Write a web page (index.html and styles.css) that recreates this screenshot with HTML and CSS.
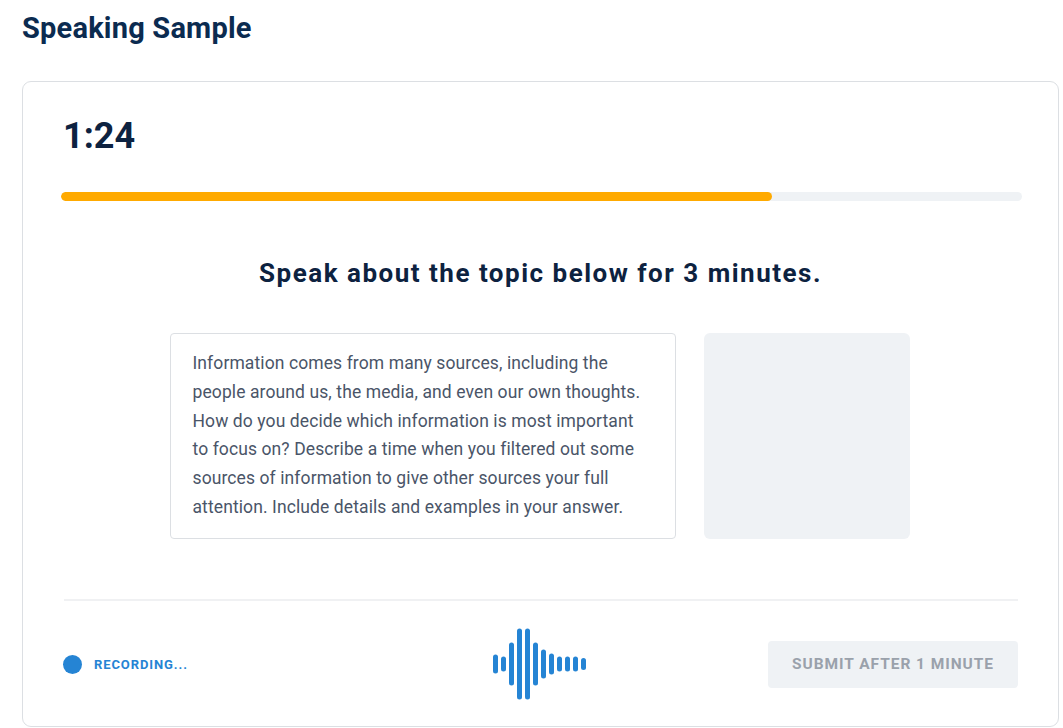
FILE: index.html
```html
<!DOCTYPE html>
<html>
<head>
<meta charset="utf-8">
<link rel="stylesheet" href="styles.css">
</head>
<body>
<div class="page">
  <h1 class="title">Speaking Sample</h1>
  <div class="card">
    <div class="timer">1:24</div>
    <div class="progress"><div class="progress-fill" style="width:74%"></div></div>
    <h2 class="prompt">Speak about the topic below for 3 minutes.</h2>
    <div class="content">
      <div class="topic">Information comes from many sources, including the people around us, the media, and even our own thoughts. How do you decide which information is most important to focus on? Describe a time when you filtered out some sources of information to give other sources your full attention. Include details and examples in your answer.</div>
      <div class="video"></div>
    </div>
    <div class="divider"></div>
    <div class="footer">
      <div class="recording"><span class="dot"></span><span class="rec-label">RECORDING...</span></div>
      <div class="wave">
        <svg width="96" height="74" viewBox="0 0 96 74">
          <g fill="#2584d4">
            <rect x="0" y="27.5" width="5" height="19" rx="2.5"/>
            <rect x="8" y="29.5" width="5" height="15" rx="2.5"/>
            <rect x="16" y="15.5" width="5" height="43" rx="2.5"/>
            <rect x="24" y="1.5" width="5" height="71" rx="2.5"/>
            <rect x="32" y="1.5" width="5" height="71" rx="2.5"/>
            <rect x="40" y="15.5" width="5" height="43" rx="2.5"/>
            <rect x="48" y="22.5" width="5" height="29" rx="2.5"/>
            <rect x="56" y="26.5" width="5" height="21" rx="2.5"/>
            <rect x="64" y="29.5" width="5" height="15" rx="2.5"/>
            <rect x="72" y="29.5" width="5" height="15" rx="2.5"/>
            <rect x="80" y="29.5" width="5" height="15" rx="2.5"/>
            <rect x="88" y="31" width="5" height="12" rx="2.5"/>
          </g>
        </svg>
      </div>
      <div class="submit-wrap"><button class="submit">SUBMIT AFTER 1 MINUTE</button></div>
    </div>
  </div>
</div>
</body>
</html>
```
FILE: styles.css
```css
* { box-sizing: border-box; }
html, body { margin: 0; padding: 0; background: #fff; }
body { font-family: Roboto, "Liberation Sans", sans-serif; color: #0d2240; }
.page { padding: 9px 4px 0 22px; }
.title { margin: 0; font-size: 29px; font-weight: 700; color: #0b2b50; line-height: 38px; letter-spacing: 0.2px; }
.card {
  margin-top: 34px;
  border: 1px solid #dcdfe3;
  border-radius: 9px;
  padding: 34px 36px 0 38px;
  height: 646px;
  overflow: hidden;
}
.timer { font-size: 36px; font-weight: 700; color: #0d2240; line-height: 40px; padding-left: 2px; }
.progress { margin-top: 36px; height: 9px; background: #eff2f5; border-radius: 5px; overflow: hidden; }
.progress-fill { height: 100%; background: #ffaa00; border-radius: 5px; }
.prompt { margin: 55px 0 0; padding-right: 2px; text-align: center; font-size: 26px; font-weight: 700; color: #0d2240; line-height: 34px; letter-spacing: 1.5px; }
.content { display: flex; justify-content: center; gap: 28px; margin-top: 43px; padding-right: 4px; }
.topic {
  width: 506px; height: 206px;
  border: 1px solid #dcdfe3; border-radius: 4px;
  padding: 15px 22px;
  font-size: 17.5px; line-height: 28.8px; color: #4a5568; letter-spacing: 0.1px;
}
.video { width: 206px; height: 206px; background: #eff2f5; border-radius: 6px; }
.divider { height: 2px; background: #f0f1f3; margin: 60px 4px 0 3px; }
.footer { display: grid; grid-template-columns: 1fr auto 1fr; align-items: center; height: 126px; padding: 0 4px 0 2px; }
.recording { display: flex; align-items: center; gap: 12px; }
.dot { width: 19px; height: 19px; border-radius: 50%; background: #2584d4; }
.rec-label { font-size: 13px; font-weight: 700; letter-spacing: 0.9px; color: #2584d4; }
.wave { display: flex; }
.wave svg { display: block; }
.submit-wrap { display: flex; justify-content: flex-end; }
.submit {
  width: 250px; height: 47px;
  border: 0; border-radius: 4px; background: #eff2f5;
  font-family: inherit; font-size: 15.5px; font-weight: 700; letter-spacing: 0.95px; color: #9aa1ab;
}
```
